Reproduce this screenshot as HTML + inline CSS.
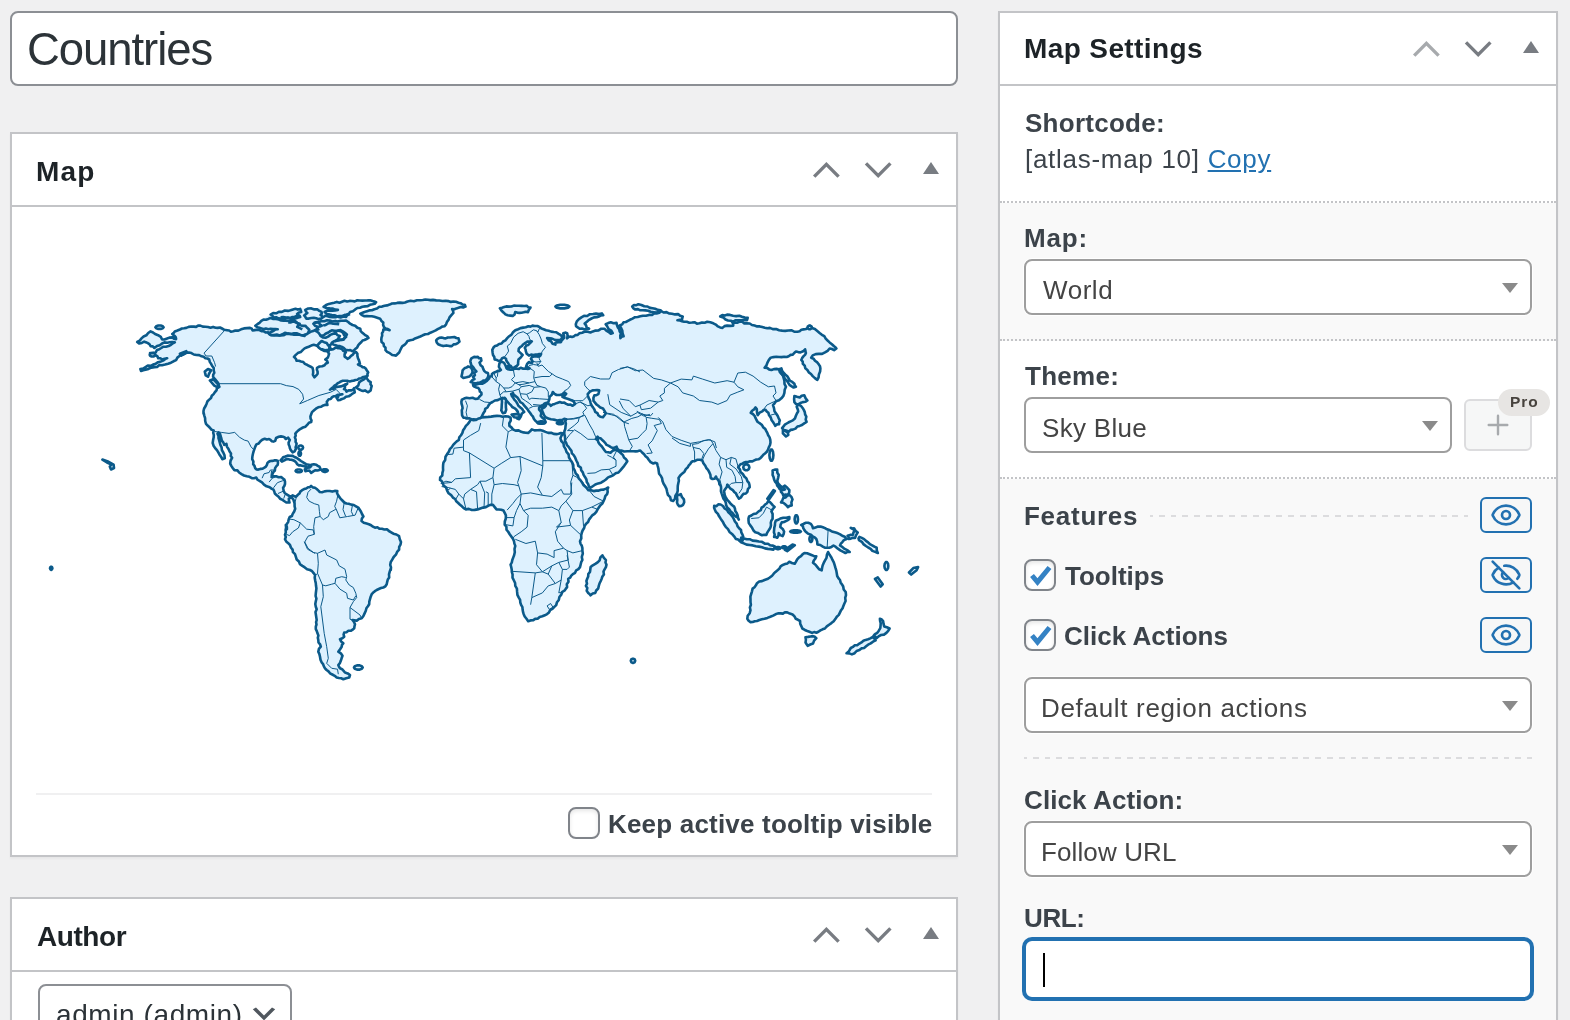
<!DOCTYPE html>
<html lang="en">
<head>
<meta charset="utf-8">
<title>Edit Map – Countries</title>
<style>
*{box-sizing:border-box;margin:0;padding:0}
html,body{width:1570px;height:1020px;overflow:hidden;background:#f0f0f1}
body{font-family:"Liberation Sans",Arial,sans-serif;color:#3c434a;position:relative;font-size:26px;-webkit-font-smoothing:antialiased}
.abs{position:absolute}
.t{will-change:transform;position:absolute;white-space:nowrap;line-height:1;transform-origin:0 0}
b,.b{font-weight:700}
#title{left:10px;top:11px;width:948px;height:75px;border:2px solid #8c8f94;border-radius:8px;background:#fff}
#title .t{left:17px;top:14px;font-size:44px;color:#2c3338}
.postbox{position:absolute;background:#fff;border:2px solid #c3c4c7;box-shadow:0 2px 2px rgba(0,0,0,.04)}
.hndle{position:absolute;left:0;top:0;right:0;height:73px;border-bottom:2px solid #c3c4c7}
.hndle .t{left:25px;top:24px;font-size:28px;font-weight:700;color:#1d2327}
.hicons{position:absolute;right:0;top:0;width:160px;height:71px}
#mapbox{left:10px;top:132px;width:948px;height:725px}
#authorbox{left:10px;top:897px;width:948px;height:200px}
#side{left:998px;top:11px;width:560px;height:1100px}
.sec{position:absolute;left:0;right:0}
.dot{border-bottom:2px dotted #c3c4c7}
.gray{background:#f9f9f9}
.lbl{font-weight:700;color:#3c434a;font-size:26px}
.sel{position:absolute;height:56px;border:2px solid #9e9e9e;box-shadow:0 0 0 1px rgba(255,255,255,.9);border-radius:8px;background:#fff}
.sel .t{left:17px;top:14px;font-size:26px;color:#444}
.sel:after{content:"";position:absolute;right:12px;top:22px;border-left:8px solid transparent;border-right:8px solid transparent;border-top:10px solid #8a8a8a}
.sel.wp:after{display:none}
.sel.wp .t{color:#2c3338}
.cb{position:absolute;width:32px;height:32px;border:2px solid #80848a;border-radius:8px;background:#fff;box-shadow:inset 0 2px 4px rgba(0,0,0,.1)}
.cb svg{position:absolute;left:-2px;top:-2px}
.eye{position:absolute;left:480px;width:52px;height:36px;border:2px solid #2271b1;border-radius:6px;background:#f6f7f7}
.eye svg{position:absolute;left:8px;top:0px}
.dash{position:absolute;height:2px;background:repeating-linear-gradient(90deg,#dcdcde 0 6px,transparent 6px 12px)}
</style>
</head>
<body>

<div id="title" class="abs"><span id="tCountries" class="t" style="left:14.8px;top:14px;font-size:45.5px;letter-spacing:-1.06px">Countries</span></div>

<div id="mapbox" class="postbox">
  <div class="hndle"><span id="tMap" class="t" style="left:24.2px;top:23.5px;font-size:28px;letter-spacing:1.2px">Map</span>
    <svg class="hicons" viewBox="0 0 160 71"><g fill="none" stroke="#787c82" stroke-width="3.4"><path d="M18.2 42.6 30.4 30.4 42.6 42.6"/><path d="M70 29.4 82.2 41.6 94.4 29.4"/></g><path d="M127 40 135 28 143 40z" fill="#787c82"/></svg>
  </div>
  <!--MAP--><svg class="abs" style="left:-2px;top:-2px" width="948" height="724" viewBox="10 132 948 724"><g fill="#def1fe" stroke="#0b5a8a" stroke-width="2.6" stroke-linejoin="round"><path stroke="none" d="M255.7 325.6 262.7 319.2 271 314.1 280.6 311.6 290.8 310.3 298.4 308.7 306.1 308.4 313.7 308.7 323.3 306.5 336 302 350 301.1 350 333.2 339.2 330.7 326.5 335.8 320.1 339.6 307.4 335.8 288.2 334.5 269.1 335.2 253.2 330.7Z"/><path d="M137.2 342 139.7 340.6 141.5 338.4 143.6 336.5 146.3 335.3 148.2 333 150.6 331.4 153 332.5 155.1 334 158.1 335.2 160.8 336.9 162.1 339.5 164.4 339.5 166.5 338.7 169.3 337.6 172.3 337.4 174 338.7 176.1 339.1 175.8 337.4 174.8 336.1 173.5 335.1 172.3 334 173.8 332.9 174.8 331.4 177.4 330.5 179.9 329.5 181.9 328.5 184.1 328.3 186.3 327.9 188.7 326.9 191.3 326.5 193.9 326.6 196.1 326.9 198.1 325.6 200.3 325.6 202.8 326.6 205.4 326.7 208 327 210.5 327.7 213.1 326.9 215.6 327.7 217.7 327.9 220 327.5 222 328.5 224.4 329.8 227.1 330.2 229.2 330.5 230.9 331.7 233.2 331.3 235.4 330.5 238.4 330.6 241.1 329.3 244 328.4 247 328.1 250 327.9 251.8 328.7 252.6 330.5 254.8 330.1 257 329.8 259.4 330 261.5 331.1 263.8 331.3 265.9 332.5 268.2 332.4 269.2 334.2 271.1 335.1 274.3 335.4 277.4 335.2 280.6 335.5 283.5 335.3 286.2 333.8 289.2 334 291.6 334.2 294 334.6 296.4 334.6 298.8 334.7 301.7 335 304.5 335.9 306 333.9 308.3 333 310.6 331.8 313.1 331.1 315.8 329.5 318.9 329.2 320.7 330.3 322.7 331.1 321.1 333.2 320.8 335.9 322.9 337.5 325.5 337.8 328.1 336.6 330.3 334.9 333.1 333.8 336.1 333.6 337.7 335.3 339.9 335.9 338.6 338.1 337 340.1 334.6 341.3 332.2 342.6 331.2 344.4 329.4 345.4 330.2 347.4 330.6 349.6 333.3 349.1 335.7 347.6 337.6 348.1 339.5 348.3 341.8 349 343.3 350.8 345.9 352.1 344.6 354.2 344.6 356.6 346.1 357.6 347.5 358.8 349.5 357.6 351 355.9 352.9 354.6 354.2 352.7 356.1 352.1 357.4 353.8 357.4 355.9 358 358.2 359 360.4 359.4 362 359.9 363.6 358 364.5 359.6 365.3 361.2 366.1 362.6 367.3 364.4 367.4 365.7 368.5 366.6 370 368.2 372.5 367.4 374 367.6 375.7 365.6 376.6 363.3 377 361.2 378.2 359.1 378.5 357.4 379.8 355.4 380 353.5 380.8 351.6 380.9 349.7 381.4 347.8 380.9 345.9 380.8 342.7 380.8 341 381.4 339.5 382.4 337.7 383.2 336.3 384.6 334.5 385.7 333.1 387.2 331.5 388.4 330 389.7 331.8 388.7 333.8 388.8 335.7 387.2 338.2 386.8 340.8 386.4 343.3 385.6 345.2 384.5 347.2 383.7 345.9 384.9 344.6 385.9 345 387.6 344 389.1 345.7 389.9 346.5 391.6 348.6 390.3 351 390.4 353 389.8 354.2 388.1 354.3 390.2 354.8 392.3 352.8 393.5 351 394.8 348.7 396.3 345.9 396.7 343.9 398.4 341.4 399.3 339.9 400 338.2 400.2 336.6 397.7 338.2 396.8 338.6 395.1 340.5 394.6 342.4 394.2 340 394.7 337.6 394.8 335.7 396.1 333.6 396.2 331.9 397.4 330.7 399 328.7 399.3 326.8 401.8 327.1 403.4 327.4 405 325.3 404.8 323.3 405.4 320.9 406.8 318.2 407.3 315.9 408.7 313.8 410.5 312 412.1 311.2 414.3 310.4 416.4 310.6 418.7 311.5 420.3 311.2 422.1 308.9 422.8 307.4 424.7 305.5 426.7 302.9 427.5 300.6 428.8 298.4 430.4 296.8 431.9 295.3 433.6 295.7 435.6 294.9 437.4 295.7 439.6 295.6 441.9 296.6 443.7 296.2 445.7 295.6 447.3 295.9 448.9 294.6 451.4 292.7 452.4 290.8 450.2 289.9 448.3 289.5 446.3 288.7 444.5 288.6 442.5 289.8 440 288.2 437.7 285.7 439 284.8 437.4 283.1 436.8 280.9 436.4 278.7 436.8 276.1 438 275.2 440.9 273.5 441.6 271.7 441.2 270.5 439.9 269.1 439 266.9 439.5 264.7 438.7 262.2 439.7 260.2 441.5 258.7 443.5 256.4 444.4 255.3 446.6 254.5 448.9 253.6 451.4 252.9 454 252.4 456.5 252.2 459.1 253.4 461.5 253.2 464.2 254.5 465.9 255.1 468 256.4 469.4 258.3 469.6 260.4 468.9 262.7 468.6 264.4 467.7 265.9 466.7 266.9 464.9 267.5 462.9 268.8 461.7 270.4 461 272.3 460.9 274.2 460.4 276 460.4 277.7 460.7 278 462.9 277.7 464.8 276.4 466.1 275.1 468.1 274.9 470.5 273.3 472.2 272.3 474.4 271.6 477 273.8 476.2 276.1 476.3 278.6 477.2 281.2 477 282.7 478.4 284.4 479.5 285 481.7 285 484 284.3 486 283.1 487.8 283.4 489.4 283.7 491 284.7 492.9 286.3 494.2 287.9 495.1 289.5 496.1 291.2 496.3 292.7 495.4 295.2 496.7 296.7 496 297.8 494.8 299.5 493.5 300.3 491.6 302.1 490.2 304.1 489.1 306.2 488.5 308 487.2 309.8 487.2 311.1 485.9 312.8 487.4 315 487.8 316.7 489 318.2 490.4 319.8 492 322 492.3 324.5 491.4 327.1 491 329.7 491 332.2 491.6 334.7 490.9 337.3 491 337 493 337.9 494.8 339.2 496.7 340.5 498.6 342.4 500.5 344.3 502.5 346.4 503.5 348.7 503.7 351.2 504.6 353.8 505 356 506.3 358.3 507.6 359.6 509.5 360.9 511.4 362 514 363.4 516.5 361.9 518.5 361.5 520.9 363.8 522.7 366.6 523.5 368.9 524.2 371.1 525.2 373 526.7 375 527.7 377.4 527.3 379.3 528.6 381.9 528.7 384.4 529.5 387 529.2 388.9 531 391.2 532.3 393.4 533.7 396.4 534.5 399.1 536.2 399.8 539.2 401 542 400.5 544.6 399.2 546.9 399.1 549.6 397.1 551.9 395.9 554.7 393.7 557 392.1 559.8 390.7 562.2 390.2 564.9 391 567.4 390.8 570 390.8 568.3 389.8 571.3 389 574.3 389.2 577.5 387.8 579.5 387.2 581.8 386.7 584.2 385.4 586.3 383.3 587.5 381 588 378.8 589 376.7 590 374.9 591.2 373.2 592.6 371.7 594.2 370.7 596.7 370 599.2 369.3 601.7 369.2 604.2 367.9 606.3 366.4 608.3 365.8 610.8 364.6 613.4 363.4 616 361.7 618.3 358.9 618.9 356.7 620.8 354.6 620.3 352.5 620 354 621.9 355 624.2 354.5 626.2 354.2 628.3 352.6 629.7 350.8 630.8 348.4 630.8 346.5 632.2 344.2 632.5 343.6 634.6 344.2 636.7 342.3 638.3 340 639.2 341.2 641.6 343.3 643.3 342 644.8 341.7 646.7 340.1 649.2 338.3 651.7 340.8 653.3 342.5 655.8 341.6 658.3 340.8 660.8 339.9 663.1 338.3 665 339 666.7 340 668.3 342.1 669.2 343.6 670.8 345 672.5 347.7 673.4 350 675 349.2 677.5 346.2 678.2 343.3 679.2 341.2 678.3 338.9 678 336.7 677.5 334.7 675.8 332.3 674.5 330 673.3 328.5 671.4 326.6 670 325 668.3 323.9 666.4 323.1 664.2 321.7 662.5 320.5 659.7 320 656.7 319.4 654.1 318.3 651.7 318.9 648.9 320.8 646.7 320.1 644.4 318.5 642.5 318.3 640 317.8 637.8 318.4 635.5 317.5 633.3 316.8 631.1 315.8 629.1 315.8 626.7 316.5 624.5 316.1 622.2 316.7 620 316.3 617.4 315.9 614.7 315.5 612.1 316.7 609.3 315.8 606.7 315.3 604 315.8 601.3 316.4 598.7 315.6 596 315.8 593.3 316.1 590.8 316.4 588.3 316 585.8 315.8 583.3 315.2 580.6 314.7 577.8 315 575 313.6 573.1 312.1 571.2 310 570 307.1 569.2 304.8 567.4 302.4 565.9 300 564.2 298.9 561.5 296.7 559.5 295.8 556.7 295 554.2 293 552.2 292.6 549.6 290.9 547.5 290 545 288.2 543.2 286.2 541.5 285 539.2 285.8 537 285 534.7 285.8 532.5 285.6 530 286.1 527.5 285.8 525 286.8 527 286.9 529.2 286.9 527 286.3 524.8 288.1 522.1 288.8 519 289.7 517 291.9 516 292.7 513.9 294.2 511.5 295.2 508.8 294.6 506.3 294.6 503.7 294 501.5 293.3 499.3 291.4 497.4 288.8 498.6 289 500.6 289.5 502.5 286.3 502.5 284.4 501.2 282.5 499.9 280.1 498.8 278.6 496.7 276.7 495.2 274.8 493.5 274.3 491.5 273.5 489.7 271.5 488.6 269.7 487.2 266.6 486.3 264 484.6 262 482.4 259.5 480.8 257.4 479.7 256.3 477.6 254.1 478.2 251.9 478.2 249.5 476.8 246.8 476.3 244 475.5 241.5 474.1 239.1 472.5 237.4 470.4 234.4 470.1 232.7 468 231.3 465.9 230.2 463.6 230.6 460.5 232.1 457.8 230.8 455.9 231 453.4 229.6 451.5 228.5 449 226.9 446.6 226.4 443.8 224.2 444.9 223.4 442.6 221.8 440.6 221.3 438.2 220.6 436.2 220.1 434 218.5 432.4 217.5 433.8 218.5 435.9 218.5 438.2 219.2 440.4 219.8 442.7 220.4 444.9 221.6 447.3 221.9 450.1 223.3 452.5 224.5 455.3 224.8 458.3 222.3 459.2 221 456.7 219.4 454.4 218.3 452.4 217.1 450.4 215.6 448.7 213.7 446.1 212.7 443 213.1 440.1 213.7 437.2 213.8 435 213.2 432.7 213.7 430.5 211.4 429.6 209.9 427.7 207.9 425.8 206 423.8 205.2 421 205.1 418.1 204.2 415.3 203.6 412.4 203.5 413.6 203.5 411 204.1 408.5 205.6 406 206.7 403.4 207.5 401.2 209.2 399.6 211 398 211.8 395.8 213.6 394.1 215 392 216.5 390.4 216.9 388.2 219.4 386.9 218.5 385.1 218.2 383.1 216.6 381.1 215 379.2 213.1 376.7 213.2 374.6 214.3 372.9 213.7 370.4 213.7 367.8 212.2 366 211.1 363.9 209.8 361.9 209.2 359.5 207.4 358.5 205.4 358.2 203.7 356.8 201.6 356.3 199.2 355.1 196.5 355 193.8 354.5 191.4 353.1 188.9 352.6 186.3 352.5 183.9 354 181.2 355 179.2 356.2 177.4 357.6 176.1 360.1 173.5 361.3 171 362.7 168.1 363.7 165.1 364.6 162.1 365.2 159.4 365.1 157.1 367 154.4 367.1 151.3 367.6 148.5 368.9 145.5 369.7 143.2 370.2 141 370.9 140.4 369 143.1 368.6 145.5 367.1 147.8 365.6 150.7 365.9 153.1 364.6 155.8 363.7 158.1 362.2 160.8 361.4 163.1 360.6 165.1 359.2 167.2 358.2 164.6 358.7 162.1 359.5 160.4 358.2 158.2 358.2 157.6 356.6 156.3 355.6 154.2 354.8 152.3 353.4 150 353.1 152.9 352.9 155.7 352.5 157 349.9 159.3 349.2 161.3 348 163.3 346.7 166 346.7 168.6 346 171 344.8 172.8 343.3 174.8 342.3 172.2 342 169.7 342.3 167.2 342.7 164.5 342.4 162.1 343.5 159.8 345.3 157 346.1 155.7 347 154.4 348 152.8 346.4 150.6 346.1 149.4 344.1 147.4 342.9 145.8 342.2 144.2 341.6 141.8 342.9 139.1 343.5ZM362.7 667.5 361.8 668.8 359.7 669.6 357 669.6 354.8 668.8 354 667.5 354.8 666.2 357 665.4 359.7 665.4 361.8 666.2ZM475.7 420 473.4 420.3 471.4 419.2 469 418.3 466.5 418.5 465 417.7 463.4 417.7 462.1 415.4 461.9 412.7 461.8 410.3 462.6 408.1 462.2 405.8 461.5 403.5 461.4 401.6 461.9 399.7 464.1 398.6 466.5 397.8 469.6 398.2 472.6 397.8 475.1 398.9 477.9 398.6 479 397.2 480.2 395.9 481.5 394.6 481.4 392.8 479.9 391.6 479.5 389.8 478.4 388.1 476.4 387.5 474.8 386.9 473.4 385.9 473 384.4 475.5 384.8 477.9 384 480.2 383.5 482.5 383.7 484.9 382.3 487.1 380.6 489 378.7 489.8 376.8 491.7 376 491.9 374.2 493.2 372.9 495.5 372.1 497.7 370.9 499.4 370.9 500.9 369.9 499.8 368.4 498.9 366.9 499.1 365.2 499.4 363.6 500.2 362.1 501.6 361.7 504.1 362.9 505.5 365.5 506.7 368.4 507.9 369.3 510.5 369.8 512.1 369.7 513.7 369.1 515.3 368.7 516.9 368.7 519 368.9 520.7 367.7 523.2 368.7 525.8 368.4 527.7 369 529.6 368.4 528 367.2 526.1 366.4 527.1 363.9 529 362 530.5 362.8 532.2 362.6 532.5 361.3 530.9 358.8 532.2 356.9 534.1 356.5 536 356.2 538.3 356.6 540.4 355.6 541.1 354 539.5 354 537.9 354.3 535.6 354.6 533.4 355 531.1 354.6 529 355.6 526.7 353.7 525.8 351.1 525.6 349.5 524.8 348 526.4 345.4 528.3 345 529.6 343.5 531.8 341.3 529.5 341.6 527.1 341.6 525.9 342.7 524.5 343.5 523 344.5 522 346 520.2 347.1 518.8 348.6 518.5 351.1 520.7 353.1 522.6 355 520.7 357.5 518.5 359.4 518.3 361 518.1 362.6 518.1 364.4 516.9 365.8 515.3 366.7 513.7 367.8 511.8 367.4 510.8 365.9 509.2 365.2 508.4 363.5 507.3 362 506.3 360.6 506 358.8 504.1 357.5 502.1 358.3 500.9 360.1 499.4 361 497.7 360.4 496.2 359.8 494.6 359.4 494.3 357 493 355 492.6 352.5 492.3 349.9 493.6 347.3 495.1 346 497.1 345.4 499.1 344 501.6 343.5 503.2 341.5 505.4 340.3 507.2 338.2 509.2 336.2 511.5 334.6 513 332.3 515.3 330.3 518.1 329.2 520.5 328.1 523.2 327.6 525.8 327.2 528.3 326.3 530.5 326.6 532.5 325.6 534.7 326 537.4 326 539.8 327.2 541.5 328.6 543.6 329.2 546.1 330.2 548.7 330.7 551.2 331.6 553.8 332 556.3 332.2 558.3 333.6 560 334.6 561.5 335.8 562.2 338.1 560.2 340 558.6 340.1 557 340 555.3 340 553.8 339.4 552 338.6 550 338.4 547.1 338.1 548.6 340.2 551 341.3 552.6 343.8 555.4 344.6 555.4 342.7 558.3 342.2 561 342.1 561.7 340.3 563.1 339 564.2 337.6 564 335.8 563.3 333.3 565.2 332.6 567.2 333.2 567.6 335.8 567.1 338.4 568.5 337.1 570.4 336.6 572 337 573.6 336.6 575.3 335.1 577.7 334.9 579.3 333.3 582.2 332.7 585 331.5 587.7 331.8 590.4 332.5 592.9 331.4 595.5 330.6 598.6 330.4 601.3 328.7 604.4 328.7 606.3 330.7 608.7 332 610.8 333.8 612.7 333.1 611.3 330.6 608.6 329.1 607.3 326.5 605.7 324.2 608.2 323.1 610.8 322.3 613.6 323.2 616.5 322.9 617 325.2 617.8 327.4 619.2 329.1 619.6 331.4 621 333.1 620.3 335.6 620.4 338.2 621.7 336.7 623.6 336.3 622.6 333.5 622.3 330.6 621.1 328 619.7 325.5 622.1 324.4 623.6 322.3 625.9 322 627.9 320.9 629.9 319.8 632.5 318.6 635 317.2 637.7 317 640.3 316.3 642.9 315.7 646 315.7 649 314.9 652.1 314.9 654.2 313.5 656.7 313.4 659.3 312.8 661.3 311.1 663.6 312.5 666.5 312.1 668.9 313.4 672 313.7 675 314.4 678.1 314.1 680.1 315.8 682.7 316.4 682 319.5 679.7 319.8 677.4 320.2 679.7 320.4 681.9 321.2 684.2 321.8 686.8 321.8 689.3 322.7 691.9 322.5 694.5 322.2 696.9 323.6 699.5 323.3 702 322.5 704.7 322.7 707.2 321.8 710.3 322.3 713.3 323.3 715.8 324.6 717.9 326.4 720.1 327.4 722.5 327.9 724.5 326.1 727.1 325.6 730.2 325.9 733.2 325.6 733.2 324 732.4 322.5 734.8 322.8 737.1 322.7 739.3 321.8 742 321.6 744.3 323.4 747 323.3 749.7 323.5 752 325 754.6 325.6 757.1 326.4 759.8 326.4 762.3 327.1 764.8 327.8 767.3 328.3 769.9 327.9 772.8 329.1 776.1 329 779.1 330.2 782.1 330.6 785.2 330.9 788.2 330.5 791.3 330.2 794.2 331.6 797.4 331.7 799.6 331.2 801.4 329.8 803.6 329.4 806 329 808.1 327.9 809.7 325.6 811 326.6 812 327.9 814.9 328.9 817.3 330.9 819.6 332.9 821.9 334.8 824.3 336.2 825.7 338.6 827.6 340.5 829.6 342.4 831.9 344.2 834.1 346.2 835.4 347.2 836.4 348.5 834.1 350.1 832 349 829.6 348.5 827.6 350.8 825 352.4 822.1 353.9 818.9 353.9 815.7 354.1 812.7 355.4 811.2 357.7 813.6 358.7 815 360.8 817.3 362.4 818.9 364.6 820 366.3 820.4 368.4 820.1 371.5 818.9 374.5 818.6 377.3 817.3 379.9 814.9 378.1 812.7 376.1 811 374 808.8 372.4 807.4 370 805.3 368.3 804.7 365.6 802.8 363.8 802.7 361.6 801.3 360 802.2 357.9 803.6 356.2 805 354.8 805.9 353.1 805.4 351.2 805.1 349.3 803.1 351.3 800.5 352.4 798.2 352.1 795.9 351.6 794.2 353 792.8 354.7 790.6 354.9 788.7 356.2 786.7 357 784.2 356.8 781.6 357.1 779.1 357 776.3 356.8 773.5 357.1 770.7 357.7 768.9 359.8 767.6 362.3 766.5 365.2 764.6 367.7 767.1 367.9 769.1 369.4 771.4 370 773.9 369.1 776.5 368.9 779.1 369.2 780.8 371.7 782.1 374.5 783.3 376.4 783.8 378.6 784.4 380.7 784.5 383.9 786 386.8 784.7 389.7 784.4 392.9 783.4 395.9 781.4 398.3 779 400.3 776 401.3 774.6 403.3 773 405.1 774 408.1 774.5 411.3 776.1 413.5 777.6 415.8 778.6 418.1 779.8 420.4 779.2 422.3 779.1 424.3 776.9 424.4 775.3 425.8 774.2 423.9 773 422 771.5 419.9 770.7 417.4 769.1 415.3 768.4 412.8 766.7 411.4 765.3 409.7 763.6 410 762.3 411.3 759.6 412.7 757.7 415.1 757.1 413.2 756.9 411.3 756.8 409.1 755.4 407.4 754.1 409.4 752.1 410.8 750.8 412.8 752.9 414 754.6 415.8 755.5 417.9 756.5 420 757.7 422 760 423.4 762 425.1 763.4 427.5 765.2 428.9 766.2 430.9 767.3 432.9 768.2 435.3 769.6 437.4 770.3 439.8 770.5 442.5 770 445 768.8 447.4 768 449.7 766.8 451.8 765 453.5 763.3 454.8 761.9 456.5 760.4 458.1 758.5 459.3 756.3 459.5 754.3 460.4 752.4 461.4 750.1 461.3 748.1 462 745.8 462.1 743.6 462.7 742.2 463.7 740.5 464.2 739.3 465.7 738.2 467.3 739.9 469.3 740.5 471.9 742.8 473.9 744.3 476.5 746.4 478.4 747.4 481.1 748.9 482.9 749.5 485 749.7 487.2 747.9 489.2 747.4 491.8 745.9 493.5 743.5 493.9 742 495.6 740.9 497.5 739 498.7 737.3 496.1 735.9 493.3 734.2 491.9 732.8 490.2 730.1 488.4 728.3 485.7 727.3 484.6 726.8 487 725.3 489 724 491 724.4 493.1 724.8 495.3 725.8 497.3 727.1 499.7 729 501.6 730.6 503.7 732.3 505.2 734.1 506.6 735 508.8 735.3 511.1 736.7 513.1 737.6 515.2 737.9 517.5 738.8 519.6 737.8 517.6 735.8 516.6 734 515 732.5 513 730.6 511.4 729.2 509.2 727.2 507.5 726.1 505.1 725.8 502.7 725 500.6 723.5 498.7 722.6 496.2 721.7 493.6 720.9 491.1 721.1 488.4 720.9 486.2 719.4 484.3 719.1 482.1 718.2 480 716.6 478.3 716 476.5 714.5 478.8 712.5 479 710.7 478 710.4 474.8 709.1 471.9 708 469.8 706.3 468 705.3 465.8 703.4 463.3 702.3 460.4 700 459.7 697.1 459.8 694.6 461.2 692.9 461.2 691.5 462 690.3 463.8 688.8 465.4 687.7 467.3 685.8 469.2 684.5 471.7 682.4 473.4 680.2 475.5 678.5 478 678.9 480.6 678.3 483.2 677.8 485.7 677.7 488.3 677.7 490.8 677 493.3 675.4 495.7 675 498.7 673.2 501 670.9 500.2 670.2 497.2 667.9 494.8 667.1 491.8 666.5 488.9 665.2 486.3 663.6 483.8 662.5 481.1 662.1 478.4 660.9 476 659.1 473.8 658.7 471.1 658.4 468.5 657.7 466 657.1 463.5 655.2 462.8 653.3 463.5 650.6 462.1 648.7 459.7 647.4 457.7 645.5 456.2 644.1 454.3 642.1 452.5 640.3 450.5 638 451.1 635.7 451.4 633.4 451.2 630.3 451.3 627.3 451.2 624.2 451.5 621.2 450.5 619.1 450.2 617.4 448.9 616.6 446.7 614.7 447.6 612.8 448.2 610.8 447.1 608.9 445.9 606.6 444.9 605.1 442.8 603.6 441.2 602 439.8 600.5 438.2 598.7 438 597.5 436.7 595.9 439 597.8 440.4 598.5 442.6 599.8 444.4 601.9 446.5 603.6 448.9 604.7 450.5 605.9 452 608.2 452.3 610.5 452.8 612.5 450.9 615.1 449.7 617.4 450.5 619.4 451.8 621.2 453.5 623 455.1 623.9 457.4 625.8 458.9 627.3 461.2 625.8 463.5 624.2 465.8 622.3 468.1 620.4 470.4 618.5 472.5 615.7 473.3 613.5 475 610.9 476.3 608.1 477.4 605.9 479.5 603.5 481.2 601.1 482.7 598.2 483.4 595.3 484.5 592.8 486.2 590.2 487.9 588.9 486.5 588.2 484.1 586.8 482 586.4 479.5 585.1 477.2 583.6 474.9 582.8 472.4 581.2 470.3 580.8 467.5 578.3 465.9 577.7 463.2 576.3 460.5 575.2 457.7 573.7 455.1 571.9 453.4 571.4 450.8 569.9 448.9 568.6 446.9 566.9 445.2 566.2 442.8 565 440.8 565.1 438.4 564.8 436 564.3 433.7 564.4 431.2 565.3 428.9 565.5 426.5 565.9 423.5 565.3 421.3 566.2 419.2 564.2 418.8 562.4 419.8 559.8 420.1 557.3 420.5 555.2 419.9 553.1 419.5 550.9 419.2 548.3 418.5 545.8 417.3 544.2 415.5 543.3 413.4 542.2 411 542 408.3 544.2 407.5 545.8 405.8 546.8 402.8 544.6 403.5 543 405.1 541.4 405.8 539.9 406.6 539.1 408 539.1 409.7 540.4 411.1 541.4 412.7 540.7 415.8 542.1 417.4 543.7 418.8 544.9 420.2 545.6 421.9 543.4 422.2 541.4 423 539.1 422.4 536.8 421.9 535.1 420.5 533.8 418.8 533 416.7 531.5 415 530.2 413.1 528.8 411.2 527.6 409.4 526.1 407.7 524.3 405.7 522.7 403.5 520.3 402.1 518.9 399.7 517.4 397.6 515.4 395.9 513.8 394.9 513.1 393.2 511.2 394 512 396.3 513.3 397.9 514.3 399.7 516 401.4 517.3 403.5 518.4 405.8 520.4 407.4 522 408.7 523.1 410.4 524.2 412 521.9 413.5 520.8 416.5 519.2 419.2 517.3 418.5 518.5 416.9 518.9 415 518.1 413.4 517.7 411.6 516.2 409.6 514.3 408.1 512.2 407 510.8 405.1 509.2 403.6 507.8 402 506.3 400.7 505.5 398.9 503.8 398.7 502.4 397.8 500.1 398.9 497.8 400.1 494.9 400.5 492.5 402 490.3 403.2 488.7 405.1 487.5 407.5 485.2 408.9 484.9 411 483.7 412.7 482.7 414.6 481.8 416.5 480.2 418.3 477.9 418.8ZM470.6 420 473.3 419.3 476.2 419.6 478.8 418.4 481.9 417.5 485 417.1 488.2 416.9 491.1 416.6 494.1 416.1 497 415.9 500 416 502.7 416.7 505.5 416.3 508.2 416.5 510.6 417.6 510.8 420.5 509.3 423.1 509.4 425.9 511.4 427.4 512.9 429.4 515.5 430.6 518.6 430.4 521.2 431.8 523.5 432.4 525.8 432.7 528.2 432.9 530.1 431.3 531.8 429.4 534.5 430.4 537.2 430.2 540 430.1 542.8 430.8 545.5 431.9 548.2 432.9 551.1 432.7 553.7 433.9 556.5 434.1 558.7 433.7 560.8 433 563 433.4 561.5 435.7 560.4 438.2 561.3 441 563.5 443.3 563.9 446.4 565.5 448.9 566.5 451.8 568.6 454.3 569 457.5 570.6 460.2 572.2 462.5 573.3 465 573.3 468 574.7 470.4 575.7 473.3 577.8 475.5 578.7 478.4 580.8 480.6 582.2 482.7 583.4 485 585.4 486.7 587 488.4 588.4 490.3 591 490.3 593.6 491.1 596.2 490.6 598.8 490.6 601.1 489.8 603.7 489.6 606 488.6 608.2 487.5 607.4 489.6 607.7 491.9 607.1 494.1 605.3 496.2 604.6 498.8 603.5 501.2 602.4 503.5 600.4 505.2 599 507.3 597.6 509.4 596.3 511.8 594.5 513.9 592.2 515.4 590.6 517.6 589 519.6 588.1 522.1 586.1 523.8 584.7 525.9 584 528.3 582.6 530.5 581.8 532.8 581.2 535.3 581.3 538.4 580 541.2 580.5 543.6 581.8 545.7 582.4 548.1 582.4 550.6 582.8 553.7 581.8 556.9 582.4 560 581.2 562.2 580.6 564.7 580 567.1 578.4 569.1 576.2 570.3 575.1 572.8 572.9 574.1 571.3 575.7 570.2 577.7 568.2 578.8 568.5 581.7 566.8 584.2 567.1 587.1 565.7 588.9 564.4 590.7 562.4 591.8 561.3 594.6 559.4 597 558.8 600 557 602.2 556.2 605.1 554.1 607.1 552.4 608.9 550.1 610.1 549 612.5 547.1 614.1 544.8 615.3 542.3 616.3 539.7 617 537.6 618.8 535.1 618.9 533 620.3 530.5 620.4 528.2 621.2 526.5 618.8 524.7 616.5 523.7 614.2 523 611.9 522.6 609.5 522.4 607.1 521.1 604.9 520.3 602.5 520.1 599.8 518.8 597.6 517.4 594.8 517.1 591.7 516.9 588.6 515.3 585.9 515.1 583 513.8 580.3 512.5 577.6 512.6 574.6 511.8 571.8 511.7 569.4 511.2 567 510.6 564.7 511.8 562.5 512.3 560 513.2 557.6 514.1 555.3 514.8 552.2 514.5 549 515.3 545.9 514.4 543.6 514 541.1 512.9 538.8 511.3 536.5 509.7 534.2 508.2 531.8 506.5 529.7 506.4 526.8 504.7 524.7 504.8 521.5 505.8 518.5 505.9 515.3 504.7 512.9 503.5 510.6 501.2 509.8 498.9 509.5 496.5 509.4 494.7 507.1 492.9 504.7 490.4 504.9 488.1 505.8 485.9 507.1 483.1 507.6 480.3 508.5 477.6 509.4 474.7 509.9 471.8 510 468.8 508.9 465.9 509.4 463.7 508.1 461.9 506.3 460 504.7 458.2 503 456.3 501.3 455.1 499 452.9 497.6 451.1 495.1 448.6 493.3 447.1 490.6 446.1 487.5 443.5 485.4 442.4 482.4 441.5 480.9 440 480 440.2 477.4 442.3 475.5 442.4 472.9 443.1 470.3 443 467.7 443.1 465 443.5 462.4 445.2 459.9 445.5 456.7 447.1 454.1 448.8 451.8 449.8 449.2 451.8 447.1 453.2 444.9 454.9 443.1 456.7 441.4 458.8 440 459.3 437.3 461 435.2 462.4 432.9 463.1 430.3 464.6 428.2 465.9 425.9 467.7 424.1 469.3 422.2Z"/><path fill="#fff" d="M294 356.9 295.8 354.9 297.8 353.1 300.7 352.1 302.9 349.9 304.6 348.4 306.6 347.5 308.7 346.7 311.2 345.6 313.8 344.8 316.2 345.4 318.2 346.7 320.3 348.1 322.1 349.9 324.5 351 327.2 351.2 329.1 353.7 328.5 355.7 327.8 357.6 325.3 359.5 327 360.7 327.8 362.7 325.9 363.5 324.6 365.2 322.2 366.2 319.5 366.5 317 367.8 316.9 369.8 317.6 371.6 317.6 373.7 316.3 375.4 314.4 377.3 312.9 374.8 313.2 372.6 313.1 370.3 312.5 367.8 310.7 366.7 308.7 365.8 306.9 364.7 304.9 363.9 303.3 362 301 361.4 298.9 360.7 296.6 360.7 295.9 358.8ZM548.3 402 549.3 399.5 549.6 396.9 551.8 394.8 552.8 392 554.5 393.8 556.6 395 559.8 395 562.4 394.2 564.3 392.4 566.2 393.7 564.7 395.7 562.4 396.9 564.9 398 567.5 398.8 570.1 399.7 572.6 400.7 574.1 402.1 575.1 403.9 572.6 405.8 570.6 404.6 568.3 404.8 566.2 403.9 564.3 402.6 561.9 402.8 559.8 402 557.2 402.9 554.7 403.9 552.6 404.5 550.9 405.8 549.8 404.5 548.3 403.9ZM587.7 394.2 589.7 391.8 592.5 390.4 594.7 390.3 597 390 599.2 390.4 598.8 392.3 598.3 394.2 596.4 395.1 594.4 395.2 593.4 398 593.5 400.9 595 402.6 596.4 404.4 598.3 405.7 600.3 407.6 603 408.5 604.5 410.9 605.9 413.3 604.5 415.3 603 417.2 600.4 416.7 598.3 415.2 597.4 413.1 595.2 411.8 594.4 409.5 593 407.4 591.4 405.3 590.6 402.8 590 400.3 588.7 398 588.1 396.1Z"/><path d="M255.3 325.7 257.4 324.2 259.5 322.8 261.3 320.9 263.5 319.6 266 319.7 268.3 318.9 270.6 318 273.3 318.9 276.1 319 278.8 319.6 281.1 320.4 283.5 320.6 285.9 320.6 289 320.9 292.1 320.3 295.1 321.1 297.2 322.8 299.1 324.7 302.1 325.9 305.3 325.7 307.2 327.8 309.3 329.8 308.5 331.9 307.3 333.9 305.2 334.5 303.2 335.4 301 335.2 299 334.2 297.1 333.3 294 333.2 291 333.9 287.9 333.4 284.9 332.8 282.4 334.3 279.8 335.4 276.8 334.5 273.7 335 270.6 334.9 268.6 333.3 271.1 332 273.7 330.8 275.5 329.5 277.7 329.3 275.3 329 273 329 270.6 328.8 268.3 329.3 265.8 328.5 263.5 329.3 261.5 328.4 259.4 327.8 257.3 327.2ZM270.6 314.5 273.1 313 276.2 313.3 278.8 311.9 281.9 311.9 284.8 310.5 287.9 310.9 290.5 310.2 293 309.4 295.4 308.8 297.8 309.6 300.2 308.9 301.2 311.9 298.9 312.5 297.1 314 298.9 315.3 300.2 317 297.6 317.7 295.1 318.6 292.7 318.2 290.3 318.2 287.9 317.5 285.5 318 283.2 318.4 280.8 318.6 278.4 318.3 276.2 317.2 273.7 317.5 272.4 315.8ZM305.3 309.9 308.2 308.5 311.4 308.4 314.4 309.4 317.5 309.4 319.4 310.9 321.6 311.9 321.8 313.7 320.6 315 322.1 316.1 323.6 317 321.2 318.4 318.5 319.1 316.2 318.2 313.8 317.8 311.4 318 308.9 318.6 306.3 318.6 305.4 317 304.2 315.5 305.7 314.2 307.3 312.9 306 311.6ZM323.6 306.8 326.1 305 328.8 303.9 331.8 303.3 334.3 302.8 336.8 301.9 339.5 302.7 342 301.7 344.5 300.8 347.1 301.4 349.6 300.9 352.2 301 354.8 301.4 357.3 300.3 359.8 300.5 362.4 300.6 365 300.5 367.5 300.4 370.1 300.2 372.6 301 374.4 301.5 376.1 302.2 374.7 303.8 372.6 304.3 370 304.8 367.7 306.2 365 306.4 362.4 306.8 360 307.7 357.4 308 355.2 309.4 352.9 311.2 350.1 311.9 349 313.6 347.1 314.5 346.1 317 343.4 316.5 340.6 317.5 337.9 316.7 335 315.3 331.8 315 329.3 314.4 326.7 314 324.6 311.9 327.1 310.8 329.7 310.4 332.5 310.7 335.2 310.5 337.9 309.9 335.1 309.6 332.5 308.5 329.7 308.4 326.5 308ZM313.4 323.7 316 322.4 318.8 321.9 321.6 321.1 324.3 321.2 327 320.3 329.7 320.6 332.4 321.5 335.2 320.9 337.9 321.6 340.6 320.7 343.4 320.8 346.1 320.6 348.2 322 350.1 323.7 352.5 325 355.2 325.7 357.4 327.8 360.3 328.8 360.7 331.1 362.4 332.8 364.8 334.8 367.5 336.4 368.5 337.9 366.5 339 364.4 340 362.6 340.5 361.4 342 359.8 343.5 358.3 345.1 357.2 347.4 355.2 349.1 353.9 350.5 352.2 351.2 350.3 350.1 348.1 350.2 345.7 349.8 344 348.1 342 346.9 339.9 346.1 337.3 345.8 334.8 345.1 333.1 344.4 331.8 343 333.6 341.5 335.9 341 338.9 340.1 342 340 344 338.4 346.1 336.9 344.1 335.2 343 332.8 340.7 331.1 337.9 330.8 334.8 330.7 331.8 330.3 329.7 331.5 327.7 332.8 325.5 333.8 323.6 335.4 320.6 335.9 319.6 334.3 318.5 332.8 317.1 331.7 315.5 330.8 316.9 329.5 317.5 327.7 316.5 326.4 315 325.7ZM317.5 345.1 319.5 343 321.6 341 324.1 342.2 326.7 343 328.1 345.2 329.7 347.1 328.9 349.1 328.7 351.2 326.8 350.1 324.6 350.2 322.7 349.3 320.6 349.1 318.6 347.4ZM360.3 313.6 363.2 312.5 366.2 311.4 369.2 310.4 371.9 310.3 374.4 309.2 377 308.6 379.3 306.8 382 306.6 384.5 305.8 387.1 305.4 389.6 304.6 392 303.5 394.7 303.4 397.2 302.9 399.8 302.6 402.5 302.9 405 302.5 407.5 301.5 410.6 300.8 413.9 301.2 417 300.2 420.2 300.2 422.8 300 425.3 299.5 427.9 299.8 430.4 300.1 433 299.9 436.2 300.4 439.3 300.5 442.5 301 445.7 300.8 448.3 301.1 450.8 301.9 453.4 301.5 456 301.8 458.5 302.7 460.6 303.2 462.6 304.5 464.8 304.7 465.5 306.6 463.2 307.4 460.8 307 458.5 307.8 456.4 308.4 454.4 309.3 452.1 309.1 453.1 310.9 453.4 312.9 451.4 315.1 449.5 317.4 448.6 319.8 447 321.9 446.1 324.3 444.4 326.3 442.1 326.6 440.2 328 438.1 328.9 435.7 330.4 433 331.6 430.4 332.7 428 334 425.3 334.2 422.8 335.3 420.3 336.5 417.7 337.5 415.1 338.4 412.7 339.8 410.1 340.2 407.5 341 406.2 343.1 404.5 344.8 402.4 346.1 401.2 348.2 400.2 350.3 399.2 352.5 397.6 354 396 355.6 394.1 355.3 392.2 355 389.8 353.2 387.1 351.8 385.5 350.2 385.5 347.7 383.9 346.1 383.6 343.8 381.6 342.1 381.3 339.7 381.5 337.6 382.2 335.5 382 333.3 383.1 331.6 383.3 329.5 386.5 329.2 389.6 330.2 387.8 329 385.6 328.4 383.9 327 383.1 324.8 383.3 322.5 381.4 320.9 380.1 318.7 377.2 317.7 374.3 316.8 371.8 316.3 369.2 316.3 366.7 316.1 364 316.2 361.6 314.9ZM436.2 340.4 437.5 338.8 439.3 337.8 441.5 337.5 443.6 338.1 445.7 338.4 447.7 337.5 449.9 337.5 452.1 337.2 454.3 337 456.4 338 458.5 338.4 458.9 340 459.5 341.6 457.8 343.1 455.9 344.2 453.6 344.4 451.8 346.1 449.5 346.1 446.4 345.4 443.2 346.1 440.6 345.2 438.1 344.2 436.7 342.5ZM356.1 387.2 358.3 385.5 359.1 382.6 361.2 380.8 364 379.4 366.3 377.3 367.4 379.1 368.5 380.8 370.7 382.1 370.5 384.2 371.7 385.9 371.1 388.1 370.7 390.4 368.2 392.3 366.5 391.4 365 390.4 363.1 391 361.2 390.4 359.2 389.5 357.4 388.4ZM280.6 460.4 281.9 458.9 283.1 457.2 285.4 456.5 287.6 455.6 290.2 455.7 292.7 455.9 294.5 457 296.5 457.8 298.8 459.4 301 461 303.6 462.6 306.1 464.2 308.8 464.7 311.2 466.1 309.9 467.4 307.6 467.6 305.4 466.7 303.3 465.9 301 465.4 298.9 465.4 297.2 464.2 296.1 462.4 294.6 461 293 460.3 291.4 459.7 289.5 459.6 287.6 459.1 285.9 459.4 284.4 460.4 281.9 461.6ZM311.2 464.8 313.8 464.2 316.3 464.8 317.8 465.9 319.5 466.7 320.7 469.3 319.2 470 317.6 470.5 315.5 470.2 313.7 471.2 311.2 472.8 309.3 470.5 307.3 470.7 305.4 471.2 304.8 469.3 307.4 467.7 309.3 466.3ZM301.9 470.9 301.3 471.7 299.7 472.2 297.8 472.2 296.2 471.7 295.6 470.9 296.2 470 297.8 469.5 299.7 469.5 301.3 470ZM327.8 470.5 327.2 471.4 325.8 471.9 324 471.9 322.6 471.4 322 470.5 322.6 469.7 324 469.2 325.8 469.2 327.2 469.7ZM303.1 447.6 302.6 448.9 301.4 449.7 299.9 449.7 298.7 448.9 298.2 447.6 298.7 446.3 299.9 445.5 301.4 445.5 302.6 446.3ZM301 453.7 300.7 455 300.1 455.8 299.3 455.8 298.7 455 298.4 453.7 298.7 452.3 299.3 451.5 300.1 451.5 300.7 452.3ZM163.6 327.2 162.8 328.3 160.8 328.9 158.3 328.9 156.2 328.3 155.4 327.2 156.2 326.2 158.3 325.5 160.8 325.5 162.8 326.2ZM155.3 354.8 154.8 355.8 153.4 356.5 151.6 356.5 150.2 355.8 149.7 354.8 150.2 353.7 151.6 353.1 153.4 353.1 154.8 353.7ZM179.9 353.7 186.3 351.2 186.9 352.5 181.2 355.6ZM204.8 371.6 208 369 211.1 370.3 209.2 373.5 208 376.7 205.7 375.4ZM209.9 380.5 213.1 379.2 218.8 385 218.2 387.5 214.3 385.6ZM470.3 361.5 470.7 359.9 471.4 358.4 474.1 356.9 476 357.1 477.9 356.9 479.1 358.3 481 358.4 481.4 360.7 479.5 362.6 480.6 365.3 482.5 366.8 483.3 369.1 484.2 370.8 485.6 372.2 487.9 372.9 488.4 376 487.1 378.7 485.2 380.6 483.3 380.5 481.8 381.7 479.9 382.5 477.9 382.7 476 383.4 474.1 383 472.4 382.6 470.7 382.1 472.2 380.2 474.5 379.1 473 376.8 474.9 375.2 474.1 372.9 476.4 371.4 474.7 369.5 473.2 367.2 471.4 365.3 470.7 363ZM461.5 376.4 461.9 374.6 462.3 372.9 462.6 370.3 463.7 369.1 464.9 368 466.6 367.6 468 366.4 470.7 367.2 472.2 369.5 472.6 372.2 471.4 374.5 469.5 376.4 466.5 377.2 463.4 377.9ZM499.9 308.3 502 307.7 504.2 307 506.3 306.4 508.9 306.6 511.4 306.5 513.9 305.6 516.5 305.7 519 305.8 521.6 305.9 524.2 306 526.7 305.7 528.3 307.3 530.5 307.6 528.9 309.7 528 312.1 525.8 311.7 523.7 312.3 521.6 312.7 519.4 312.9 517.3 312.6 515.2 312.1 514.6 314.4 512.7 315.9 510.2 315.6 507.6 315.3 505.4 314.4 503.7 312.7 501.6 310.7ZM569.4 306.6 568 307.8 564.5 308.4 560.2 308.4 556.7 307.8 555.4 306.6 556.7 305.5 560.2 304.8 564.5 304.8 568 305.5ZM575.8 324.2 576.8 321.3 578.9 319.1 581.4 317.4 584 315.9 587.2 316 589.9 314.2 593 314 596 313.6 599 314.1 601.9 313.4 603.2 315.3 600.9 315.4 598.9 316.5 596.8 317.2 594 317.4 591.5 318.5 589.1 319.8 586.9 321.7 584.7 323.6 586.1 325.3 586.6 327.4 589.1 328.7 586.6 329.1 584 329.3 581.9 328.6 579.6 328.7 577.7 327.4 576.1 326.2ZM501.7 398.9 504.7 397.8 506.2 400.5 505.8 402.8 505.9 405.1 505.9 407.4 506.2 409.7 505.1 412.7 502.8 413.1 501.3 410.4 501.6 408.1 501.7 405.8 501.8 403.9 502 402ZM511.6 414.6 516.2 414.1 520 415 518.1 417.9 514.3 417.3ZM545.4 422.6 544.6 423.4 542.6 423.8 540.1 423.8 538 423.4 537.3 422.6 538 421.9 540.1 421.4 542.6 421.4 544.6 421.9ZM563.4 423 562.8 423.8 561.1 424.2 559.1 424.2 557.4 423.8 556.8 423 557.4 422.3 559.1 421.8 561.1 421.8 562.8 422.3ZM509.8 367.4 509.5 368.1 508.7 368.6 507.8 368.6 507 368.1 506.7 367.4 507 366.6 507.8 366.2 508.7 366.2 509.5 366.6ZM632.2 306.5 634 305 636.4 305.2 638.4 304.2 641.4 305 644.3 306.3 647.5 306.5 649.9 307.9 652.6 308.3 655.2 308.8 657.7 309.9 660.5 310.3 658.6 311.4 656.7 312.6 653.7 312.2 650.6 311.8 648.1 310.7 645.5 310.4 642.9 310.3 640.3 310.3 637.9 309.1 635.3 309.5 633.4 308.4ZM720.2 316.4 722.3 315.1 724.9 315.5 727.1 314.6 730.1 314.9 733.1 315.7 736.2 316.1 739.3 315.7 742 316.7 744.8 317.5 747.7 317.9 747 320.2 743.9 320.1 740.9 320.2 737.8 320.2 735.3 320.4 733.2 321.8 730.7 320.7 728 320.5 725.5 319.5 723.2 317.4ZM811.8 327.4 811.4 328.5 810.3 329.2 809 329.2 807.9 328.5 807.5 327.4 807.9 326.3 809 325.7 810.3 325.7 811.4 326.3ZM779.1 369.2 781.4 368.4 782.1 370.8 783.5 372.7 785.2 374.5 787.3 376.2 788.6 378.4 789.8 380.7 792.3 381.9 794.4 383.7 794.8 385.4 795.9 386.8 793.6 387.5 791.7 386.4 789.8 385.2 788.4 383.1 787 380.9 785.2 379.1 784 377.3 783.1 375.3 781.4 373.8 779.7 371.8ZM794.4 396 797 396.8 799.7 397.5 801.7 395.7 804.3 395.2 805.5 398.1 807.4 400.5 805.3 401.8 802.8 402.1 800.4 403 798.2 404.4 795.9 403.9 794.4 402.1 794.1 399.1ZM798.2 404.4 800.9 405.8 802.8 408.2 803.9 410.1 804.8 412.1 805.1 414.3 806.3 416.7 805.7 419.5 806.6 422 804.2 423.4 802 425 799.7 425.9 797.4 426.5 795.5 428.6 792.8 429.6 790.6 429.9 788.9 431.6 786.7 431.9 784.1 430.4 782.1 428.1 783.5 426.4 784.8 424.7 786.7 423.5 788.7 422.3 790.7 421.4 792.8 420.4 794.9 418.5 795.9 415.8 796.9 413.5 798.2 411.3 797.6 408.9 796.7 406.7ZM782.9 429.6 787.5 431.1 788.3 435 786 436.5 782.9 433.4ZM677 494.8 679 495 680.8 494.1 681.9 497 683.9 499.4 684.2 502.2 683.1 504.8 681.4 505.9 679.3 506.3 677.8 504.6 677 502.5 677.3 499.9 677 497.4ZM749.4 467.3 748.8 469.1 747.3 470.2 745.4 470.2 743.8 469.1 743.3 467.3 743.8 465.5 745.4 464.4 747.3 464.4 748.8 465.5ZM773.4 455.1 773 458.5 772 460.6 770.8 460.6 769.8 458.5 769.4 455.1 769.8 451.7 770.8 449.5 772 449.5 773 451.7ZM714.2 505.9 716.5 506.2 718.3 504.3 720.6 504.5 723 506 724.5 508.4 727 509.8 728.4 512.4 730.6 514.4 732.5 516.6 733.8 519 734.9 521.5 736.7 523.6 737.5 526.1 739.1 528.2 741 530 741.3 532.4 742.5 534.6 743.3 536.9 742.8 539.8 741.7 542.6 739.9 541.2 738.2 539.6 735.9 538.9 734.1 536.3 732 533.9 729.5 531.9 728 529.1 725.7 526.8 724 524.2 722.6 521.4 720.8 518.9 719.1 516.3 717.9 513.9 715.9 511.9 714.8 509.4 714.1 507.7ZM741.3 537.7 744 538.5 746.8 539.2 749.7 539.2 752.6 540.6 755.8 540.9 758.9 541.5 762 541.8 764.8 543.7 768 543.8 770.1 545.3 772.6 545.6 774.9 546.4 774.2 548 773.4 549.6 770.6 549.1 767.8 548.9 765 548.4 762 547.2 758.9 546.6 755.8 546.2 752.8 545.4 749.7 545 746.6 544.6 743.8 543.4 741 542.3 740.6 540ZM749.1 516.5 751.4 515.5 753.5 514 756.4 513.4 758.6 511.4 760.8 510.2 761.6 507.6 763.7 506.3 765.1 504.5 767 503.2 768.2 501.2 770 502.2 771.4 503.7 772.9 505.4 774.6 506.9 772.8 509 771.4 511.4 772.6 513.8 772.6 516.5 772.6 518.8 771.3 520.7 770.8 522.8 771 525.1 770.5 527.3 769.4 529.3 768.2 531.1 767.1 532.9 766.3 534.9 764.2 534.7 762 535.2 759.9 534.3 757.9 532.9 755.3 532.3 753.5 530.5 752.1 527.8 750.3 525.4 748.8 523.1 748.5 520.3 748.5 518.4ZM775.7 520.8 778.1 519.8 780.3 518.5 783.3 517.7 786.4 517.8 789.4 517 789.3 518.9 787.9 520.1 785.9 521.1 784 522 781.8 522.4 780.6 524.6 780.3 527 782.7 528.9 784.1 531.5 783.7 533.9 782.6 536.1 780.3 535.1 778.7 533.1 778.5 535.6 777.2 537.7 775.7 537 774.1 536.9 774.7 534.6 773.9 532.3 774.1 530 774.3 527.7 774.9 525.4 775 523ZM772.6 470.4 774.8 469.6 777.2 469.6 777.3 472.5 778.7 475 778.1 478.1 777.2 481.1 778.3 483.7 780.3 485.7 782.7 487.5 784.9 489.5 781.8 490.2 779.7 489.2 778.7 487.3 777.2 485.7 776.6 483.4 775 481.6 774.1 479.5 773.6 477.2 772.6 475 772.7 472.7ZM783.3 497.9 785.7 497.5 787.3 495.7 789.4 494.8 791.4 496.8 792.5 499.4 791.4 502.4 791.7 505.5 789.6 505.9 787.9 507.1 786.5 505.4 784.9 504 783.2 502.7 781 502.5 782.3 500.3ZM780.3 487.2 782.8 487.1 784.9 485.7 787.3 487.8 789.4 490.2 789.2 492.7 787.9 494.8 785.5 494.5 783.3 495.6 782.5 493.5 781 491.8 780.8 489.5ZM767.3 498.7 773.4 490.2 774.9 491 768.8 499.7ZM798 519.3 797.7 521.8 796.8 523.4 795.8 523.4 795 521.8 794.6 519.3 795 516.8 795.8 515.2 796.8 515.2 797.7 516.8ZM800.9 531.5 799.9 532.3 797.2 532.7 793.9 532.7 791.2 532.3 790.2 531.5 791.2 530.8 793.9 530.4 797.2 530.4 799.9 530.8ZM780.4 548.1 780 548.7 778.7 549.1 777.2 549.1 776 548.7 775.5 548.1 776 547.4 777.2 547.1 778.7 547.1 780 547.4ZM786.2 547.3 785.8 547.9 784.8 548.3 783.4 548.3 782.4 547.9 782 547.3 782.4 546.7 783.4 546.3 784.8 546.3 785.8 546.7ZM784.9 549.9 792.5 544.6 794.8 545.3 787.2 551.1ZM588.2 592.9 586.7 590.8 587.3 588 585.9 585.9 587 583.7 586.4 581 587.2 578.8 588.2 576.5 588.3 574 590 571.9 590.3 569.5 590.6 567.1 592.8 565.3 595.3 563.9 597.6 562.4 599.6 560.3 600.4 557.4 602.4 555.3 603.9 557.8 605.9 560 605.5 562.4 606.5 564.7 605.9 567.1 604.6 569.3 603.5 571.6 603.9 574.4 602.4 576.5 601.6 578.9 600.6 581.2 599.5 583.5 598.8 585.9 598.2 588.5 596.2 590.5 595.3 592.9 592.7 593.6 590.6 595.3 589.5 594ZM747.3 618.8 747.7 615.7 749.7 613.2 750.5 610.2 749.9 607.5 750.9 604.8 750.5 602.1 750.5 599.4 750.4 596.6 751.2 593.9 752 591.3 752.6 588.6 754.5 587.2 755.9 585.3 757 583.2 759.2 581.5 762 581.1 764.5 580 767.3 579.1 769.8 577.5 772.1 575.7 773.7 573.7 775.5 571.9 777.5 570.3 779.4 568.6 780.6 566.3 782.8 564.9 785.1 564.1 787.5 563.4 789.3 561.7 791.9 563 794.7 563.8 796 561.6 797.2 559.3 799 557.4 801 556.2 802.5 554.4 804.4 553 807.1 553.2 809.6 554.2 812 555.2 814 556.2 816.3 556.3 815.4 558.5 813.8 560.5 813 562.8 815.5 564.7 817.4 567.1 819.1 569.2 821.7 570.3 822.1 567.7 822.7 565.2 823.7 562.9 824.9 560.6 826.5 557.9 826.9 554.8 828.1 552 829.6 554.8 831.4 557.4 832.5 559.9 833.8 562.3 834.6 564.9 835.4 567.7 836.3 570.6 836.8 573.5 837.2 576 838.4 578.1 840 580 840.6 582.4 842 584.4 843.2 586.5 843.7 589.5 845.7 592 846 595.1 845.2 597.9 845.6 601 844.3 603.7 843.4 605.9 842.6 608.2 841.1 610.2 839.9 612.6 838.8 614.9 836.8 616.7 835.3 619.1 833.7 621.3 831.4 623.1 829.1 624.7 826.8 626.4 824.9 628.5 822.6 629.3 820.4 630.4 818.4 631.8 816.4 632.7 814.1 632.1 812 632.9 809.4 631.7 806.6 630.7 804.4 629.7 802.3 628.5 801.3 626.1 800.2 623.7 800.1 621 798 619.8 795.8 618.8 794.5 616.4 792.6 614.5 789.8 613.6 787.2 612.4 784.9 612.2 782.9 613.6 780.7 613.4 778 613.4 775.5 614.3 773.1 615.6 770.3 616.8 767.4 617.9 764.5 618.8 761.9 619.3 759.4 620 757 621 754.8 621.3 752.7 622 750.5 622.1 748.6 620.8ZM805.5 637.2 808 636.9 810.5 636.5 813 636.1 814.9 636.8 816.3 638.2 814.1 640.6 813 643.6 810.3 644.5 807.7 645.8 806.6 644.2 805.5 642.6 805.9 639.9ZM879.9 618.8 881.8 619.5 883.1 621 883.5 623.7 884.2 626.4 886.9 627.3 889.6 628.5 888.2 630.9 886.4 632.9 884 634.6 881 635 878.6 636.3 876.7 638.2 875.4 636.6 873.4 636.1 875 634.1 877.3 632.8 878.8 630.7 880.3 628.2 880.6 625.3 880.7 623.1 880.1 621ZM872.4 637.2 874.3 638.5 875.6 640.4 873 641.7 870.7 643.4 868.1 644.7 866.1 646.3 864.1 648 861.4 648.4 859.4 650.1 856.6 651 854.6 653.2 851.9 654.4 849.3 653.4 846.5 653.3 848.4 651.9 849.6 650 850.8 648 852.9 646.9 854.8 645.3 857.5 645.1 859.4 643.6 861.5 642.4 863.4 640.8 865.7 639.9 868.1 639.3 870.3 638.4ZM801.2 525 803.4 524 805.5 522.8 808.3 522.8 810.9 523.9 812.2 525.9 813 528.2 815.5 527.4 818 526.6 820.6 526.5 822.9 527.2 825 528.1 827.1 529.3 830 530.3 832.7 531.8 835.7 532.6 838 533.3 840.2 534.4 842.2 535.8 844.8 536.8 846.5 539 843.9 540.1 842.2 542.3 840.8 543.7 840 545.5 842.3 546.9 844.3 548.7 847.2 550.1 849.7 552 847.4 551.9 845.4 553 842.8 551.7 840.3 550.3 837.9 548.7 835.8 546.9 833.5 545.5 831.5 546.9 829.2 547.7 827 547.8 824.8 547.7 822.8 546.6 820.3 545 817.4 544.4 817.2 541.6 816.3 539 814.7 537.3 812.6 536.3 810.9 534.7 807.9 533.6 805.5 531.5 804.3 529.9 803.3 528.2 802.9 526.2ZM847.6 535.8 850.2 534.9 853 534.7 853.5 532.3 855.1 530.4 852.9 529.2 850.8 527.8 852.3 528.7 854 528.2 855.5 530.7 857.7 532.6 856.1 535.1 855.1 537.9 852.9 537.8 850.8 538.6 848.6 539 848.7 537.2ZM859.4 536.9 861.8 537.9 864.1 539.1 866 540.9 868.1 542.3 869.9 544.2 872.2 545.3 874.4 546.6 876.7 547.7 876.8 550.4 877.8 553 875.1 551.9 872.4 550.9 870.6 548.8 868.2 547.5 865.9 546 863.7 544.4 861.8 541.8 859 540.1 858.5 538.4ZM888.3 566 888 568.4 887 569.9 885.8 569.9 884.8 568.4 884.4 566 884.8 563.6 885.8 562.1 887 562.1 888 563.6ZM875 578.9 877.8 577.4 882.7 584.3 880.6 586.5ZM909 572.5 913.3 568.1 918.1 567.1 916.6 570.3 911.2 574.6ZM812.4 539 812.1 540.8 811.4 541.9 810.4 541.9 809.7 540.8 809.4 539 809.7 537.3 810.4 536.2 811.4 536.2 812.1 537.3ZM102.4 459.6 108.6 461.8 113.6 464.6 114 468 111 469.5 109.8 466.5 111.5 464.5 107 462.5ZM52.4 568.3 52 569.4 51.2 569.9 50.4 569.4 50 568.3 50.4 567.2 51.2 566.7 52 567.2ZM635.2 660.8 634.6 662.4 633 663 631.4 662.4 630.8 660.8 631.4 659.2 633 658.6 634.6 659.2Z"/><path fill="none" d="M280.6 317.3 283.2 317 285.7 317.6 288.2 317.9 290.4 318 292.5 317 294.6 316.7 296.7 316.1 298.9 316.5 301 316M323.9 316 327 316 329.9 317 332.9 317.3 336.1 317.1 339.2 316.1 342.4 316 344.8 314.9 347.6 315.1 350 314.1M288.2 322.4 290.4 322.4 292.4 321.7 294.6 321.8 297 323 299.7 323.7 298.4 325.3 297.2 326.9 299.8 328.1 302.3 329.4M313.7 323 316.2 322.2 318.8 322.4 319.9 324.5 322 325.6 319.9 326.5 317.6 326.9 317.8 328.9 318.8 330.7M323.3 325.6 325.7 324.9 327.9 323.6 330.3 323 333.2 323.7 336.2 323.9 339.2 324.3M333.5 332.6 335.9 331.8 338 330.5 340.5 330.1 342.8 331.3 344.9 332.8 346.9 334.5 345.2 337 343.7 339.6 340.7 339.5 337.8 340.4 334.8 340.9"/></g><path fill="none" stroke="#0b5a8a" stroke-width="1" stroke-linejoin="round" d="M224.8 330.2 204.1 353.1 206 356 211.8 356 214.6 362.7 215.6 366.5M219 383.7 280.6 383.7 286.3 385.6 293 386.6 298.8 389.4 302.6 394.2 303.6 399 299.7 403.8 307.4 400.5 318.9 395.5 330.3 392.3 336.1 389.4 339.9 393.3 338 398M214.6 431.5 221.3 432.4 229 433.4 234.7 432.4 239.5 437.2 244.3 440.1 248.1 441.1 251 446.8 253.8 449.7M262.1 478.2 264 473.8 269.1 472.5 270.4 470 274.2 470M271.6 470.6 271 475.7M269.1 482.1 272.3 478.2 276.1 476.7M273.5 487.8 277.4 482.7 282.5 480.8 284.4 480.2M278 493.5 283.7 491M283.7 498.6 285 494.8M294.6 503.7 296.5 496.7M311.1 489.1 308 492.3 306.7 497.4 309.2 501.2 314.3 503.7 318.8 505 319.4 511.4 320.1 516.5M320.1 516.5 323.3 519.7 328.3 516.5 329.6 512.7 335.4 509.5 336.6 510.1M337.9 494.8 336.6 501.2 334.7 506.3 336.6 510.1 339.8 517.8 347.5 516.5 355.1 515.2 358.3 507.6M344.3 502.5 343 509.5 345.6 516.2M352.6 504.4 351.3 511.4 353.2 515.5M288.8 519 293.9 519.7 300.3 522.9 298.4 528 292.7 531.8 289.5 535.6 286.3 534.3M300.3 522.9 306.7 529.2 313.1 529.9 314.3 534.3 313.7 526.7 315 517.8 320.1 516.5M314.3 534.3 308 536.2 304.8 542 308 548.3 313.1 552.2 315 553.4M304.2 541.7 307.5 549.2 313.3 552.5 317.5 553.3 325 550 326.7 555 336.7 560 339.2 565.8 345 569.2 346.7 576.7 345.8 580 349.2 585 353.3 587.5 355.8 593.3 356.7 597.5 353.3 601.7 350 607.5 350 619.2 352.5 620M317.5 553.3 318.3 563.3 317.5 573.3 315.8 575M317.5 573.3 322.5 585 325.8 585.8 331.7 584.2 335 583.3 335.8 578.3 341.7 576.7 345.8 577.5M335 583.3 340 589.2 346.7 593.3 347.5 598.3 353.3 600 355.8 595.8M322.5 585 323.3 596.7 320.8 606.7 322.5 620 324.2 633.3 326.7 646.7 328.3 658.3 326.7 663.3 331.7 668.3 337.5 669.2 338.3 674.2M350 607.5 360 615 361.7 618.3M480.7 423.1 478.8 430.6 470.6 435.3 463.5 440 463.5 447.1M447.1 454.6 452.9 454.1 454.1 448.2 463.5 447.1 463.5 450.6 469.4 452.9 470.6 477.6 455.3 478.8 451.8 482.4 445.9 481.2 442.4 482.8M469.4 452.9 494.1 468.2 501.2 463.5 510.6 457.6M503.5 417.6 502.4 425.9 508.2 431.8 505.9 447.1 510.6 457.6 520 456.5 542.8 465.9M508.2 431.8 512.9 429.4M541.9 432.9 542.8 460.7 542.8 465.9M542.8 460.7 571.8 460.7M520 456.5 521.2 470.6 517.6 482.4 518.8 485.9M494.1 468.2 492.9 477.6 485.9 481.2 480 481.2 477.6 484.7 470.6 489.4M494.1 484.7 502.4 483.5 514.1 484.7 518.8 485.9 521.2 494.1 516.5 498.8 512.9 503.5 507.1 510.1M492.9 477.6 494.1 484.7 491.8 494.1 491.8 504.7M488.2 506.4 488.2 492.9 485.9 491.8M484 507.5 484.7 492.9 480 481.2M477.6 508.7 476.5 491.8 470.6 489.4M465.9 508.7 463.5 498.8 464.7 494.1 470.6 489.4M455.3 500 458.8 494.1 463.5 498.8M447.1 490.6 450.6 488.2 455.3 489.4 458.8 494.1M440.7 483.5 448.2 482.8 451.8 482.4M441.6 486.6 448.2 487.5 450.6 488.2M542.8 465.9 541.2 477.6 537.6 487.1 542.4 495.3M521.2 494.1 530.6 492.9 542.4 495.3M521.2 494.1 520 503.5 523.5 510.6M523.5 510.6 530.6 508.2 542.4 508.2 551.8 507.1 558.8 510.6 561.2 505.9 565.9 501.2M542.4 495.3 551.8 496.5 561.2 489.4 563.5 494.1 570.6 494.1 571.8 482.4M571.8 460.7 572.9 475.3 570.6 482.4 571.8 494.1 565.9 501.2 572.9 510.6 582.4 510.6 591.8 507.1 597.6 509.4M572.9 475.3 580 478.8 588.2 489.4M589.4 490.6 594.1 496.5 603.5 501.2 591.8 507.1M572.9 510.6 569.4 520 570.6 525.4 581.2 535.3M582.4 510.6 583.5 525.9M558.8 510.6 561.2 522.4 556.5 527.1 570.6 525.4M523.5 510.6 528.2 515.3 527.1 527.1 521.2 531.8 514.1 536.5 512.9 538.8M515.3 539.3 525.9 543.5 535.3 541.2 537.6 552.9 547.1 554.1 554.1 557.6 554.1 550.6 563.5 548.2M561.2 522.4 555.3 531.8 557.6 541.2 563.5 548.2M505.9 517.6 514.1 517.6 516.5 510.6 520 503.5M505.9 524.7 512.9 525.9 514.1 517.6M511.8 571.3 535.3 572.9 542.4 571.8M537.6 552.9 536.5 564.7 542.4 571.8M542.4 571.8 551.8 565.9 558.8 562.4 568.2 560 567.1 550.6 563.5 548.2M567.1 550.6 572.9 552.9 582.4 550.6M567.1 555.3 569.4 567.1 567.1 569.4 562.4 569.4M551.8 565.9 548.2 574.1 555.3 583.5 561.2 580 562.4 569.4 558.8 562.4M535.3 572.9 531.8 597.6 530.6 604.7M531.8 597.6 542.4 592.9 548.2 585.9 555.3 583.5M548.2 574.1 542.4 571.8M561.2 580 558.8 592.9 562.4 591.8M547.1 605.9 550.6 603.5 552.9 607.1 549.4 609.4 547.1 605.9M465.5 400.7 467.4 405.8 466.1 412.2 467.4 417.9M479.5 399.4 484.6 402 491 402.6M491 375.8 496.1 381.6 499.9 384.1 498.6 389.2 499.9 395 501.2 397.9M493.5 372.7 496.1 377.8 496.1 381.6M498 370.7 497.4 376.5 496.1 377.8M513.3 369.5 514.6 376.5 511.4 379.7 515.2 382.9 512 386.7 508.8 388 503.7 388 499.9 384.1M529.2 367.6 534.3 371.4 533.7 377.8 535 381.6 529.2 382.9 522.9 381.6 515.2 382.9M515.2 382.9 519 384.8 524.1 384.1 529.2 382.9M503.7 388 506.3 391.8 512.7 391.1 519 389.2 521.6 386.7 519 384.8M521.6 386.7 529.2 385.4 534.3 387.3 531.8 391.8 526.7 394.3 520.3 393.7 519 389.2M499.9 395 503.7 391.8 506.3 391.8M512.7 391.1 513.3 393.1M520.3 393.7 521.6 398.2 525.4 400.7 529.2 403.3 531.8 405.8M534.3 387.3 540.7 386.7 545.8 388 548.3 391.8 548.3 396.9M531.8 398.2 539.4 398.8 548.3 399.4M533.1 404.5 540.7 405.2 547.1 404.5M526.7 394.3 529.2 399.4 531.8 398.2M529.2 408.3 533.1 406.4 540.7 405.8M536.9 363.1 538.2 366.3 542 365 548.3 371.4 552.2 373.9 549.6 376.5 542 376.5 534.3 377.8M552.2 373.9 556 376.5 562.4 379 568.7 381.6 570.7 385.4 567.5 389.2 564.3 390.8M535 381.6 536.9 385.4 540.7 386.7M590.4 391.1 587.9 389.2 584.7 385.4 584.7 381.6 590.4 376.5 600.6 379 609.5 379 612.1 372.7 618.5 369.5 627.4 366.9 633.8 368.8 640 372M575.1 403.9 580.2 402 584 404.5 586.6 408.3 582.8 412.2 584 414.7 578.9 417.9 572.6 419.2 566.2 419.2M567.5 398.8 575.1 400.7 582.8 400.7 587.9 395.6M580.2 402 587.9 405.8 592.3 404.5M504.1 357.5 507 353.7 508.6 351.1 507.3 346 510.5 343.5 513.7 337.1 518.1 333.3 523.2 331.7 527.1 333.9M531.8 341.3 529.6 339 529 336.5 527.1 333.9 529.6 332.7 533.4 329.8 536.6 330.7 537.9 332 539.8 327.6M536.6 330.7 539.2 334.6 541.1 339 542.4 343.5 545.5 347.3 542.4 351.1 541.1 354M540.4 355.6 539.2 358.8 540.8 361.5M532.5 361.3 536 362 540.8 361.5M529 365.5 533.4 364.5 537.9 365.2 540.8 361.5M620 368.4 627.6 366.9 635.3 370.7 642.9 370 653.7 378.4 661.3 379.9 670.5 383M670.5 383 664.4 388.3 664.4 392.9 659.8 396 662.8 400.5 658.2 402.1M670.5 383 681.2 379.1 691.9 379.9 693.4 376.1 702.6 379.1 714.8 383 727.1 380.7 734 382.2 737.8 386.8 743.9 389.8M670.5 383 678.1 386.8 682.7 392.9 693.4 396 699.5 400.5 711.8 402.1 717.9 404.4 727.1 400.5 730.1 395.2 737.8 392.1 743.9 389.8M734 382.2 737.8 373 745.4 372.2 753.1 376.1 760.7 382.2 768.4 386.8 774.5 386 776 392.9 773 396 776 400.5M762.3 411.3 766.8 405.1 773 402.1 776 401.3M770.7 415.1 776.8 413.5M620 399 629.2 400.5 635.3 406.7 639.9 405.1 649.1 400.5 658.2 402.1M639.9 405.1 641.4 409.7 650.6 408.2 658.2 402.1M636.8 411.3 642.9 414.3 650.6 415.8 652.9 413.1M658.2 417.4 662.8 422 665.9 429.6 672 436.5 681.2 440.3 690.4 443.4 699.5 441.8 708.7 439.6 714.8 441.8 716.4 448M672 438 679.7 443.4 690.4 446.4 690.4 443.4M692.3 444.4 694.6 452 694.6 460.4M701.5 459.7 703.8 453.5 700 448.9 693.1 447.4M702.3 460.4 704.6 455.1 708.4 448.9 713 443.6 710.7 439.8 703.8 440.5 697.7 443.6 692.3 444.4M713 443.6 716 450.5 720.6 457.4 726 459.7M720.6 457.4 719.1 464.2 722.1 471.9 719.8 479.5 721.4 485.7M726 459.7 731.3 457.4 735.9 458.9 738.2 467M731.3 457.4 729.8 464.2 735.9 468.8 741.3 476.5 742.8 482.6M726 459.7 726.7 467.3 732.1 470.4 735.1 476.5 735.9 482.6 742.8 482.6M735.9 482.6 731.3 483.4 729 485.7M742.8 482.6 742 488.7 739 493.3M751.2 518.5 758.9 517.8 763.4 513.2 766.5 507.1 771.9 510.1M828.1 530 827.1 548.7M607.8 394.2 609.7 404.7 621.2 412.4 630.8 416.2 637.5 412.4M603 412.4 613.6 414.3 623.1 421.9 628.9 423.8M619.3 400.9 623.1 408.5 630.8 416.2M637.5 412.4 644.1 416.2 649.9 414.3M566 419.4 573.7 418.4 580.8 416.8 584.9 415.3M579.3 417.3 578.2 421.9 574.2 425.5 567.5 430.6M584.9 415.3 588.9 423.5 593 430.6 595.6 436.7 596.6 438.2M574.2 429.6 580.8 433.7 587.9 439.3 595.1 439.3M567.5 430.6 573.7 430.6 569.6 434.7 566.5 438.8 565 440.8M587.4 473.4 595.1 472.9 601.2 469.9 609.3 469.3 612.9 475M609.3 469.3 616 466.3 616 460.2 613.4 457.1 616.5 451M607.3 455.1 611.4 457.1 616 460.2M629.7 450.5 632.3 446.4 628.7 439.8 627.2 434.7 624.6 426.5 624.1 421.9M628.7 439.8 637.9 438.2 642 433.7 646.1 429.6 647.1 423.5 646.1 417.3 651.2 418.2M624.1 421.9 631.8 418.4 637.9 416.8 643 413.8 646.1 417.3M646.6 453.5 652.2 453 648.1 444.9 652.2 440.8 657.3 430.6 654.2 425.5 661.4 423.5 659.3 419.4 651.2 418.2M605.3 413.3 611.4 414.8 617.5 416.3 624.1 421.9"/></svg><!--/MAP-->
  <div class="abs" style="left:24px;top:659px;width:896px;height:2px;background:#f0f0f1"></div>
  <div class="cb" style="left:556px;top:673px"></div>
  <span id="tKeep" class="t lbl" style="left:595.7px;top:677px;font-size:26px;letter-spacing:0.19px">Keep active tooltip visible</span>
</div>

<div id="authorbox" class="postbox">
  <div class="hndle"><span id="tAuthor" class="t" style="left:25.1px;top:23.5px;font-size:28px;letter-spacing:-0.43px">Author</span>
    <svg class="hicons" viewBox="0 0 160 71"><g fill="none" stroke="#787c82" stroke-width="3.4"><path d="M18.2 42.6 30.4 30.4 42.6 42.6"/><path d="M70 29.4 82.2 41.6 94.4 29.4"/></g><path d="M127 40 135 28 143 40z" fill="#787c82"/></svg>
  </div>
  <div class="sel wp" style="left:26px;top:85px;width:254px;height:60px;border-color:#8c8f94;box-shadow:none"><span id="tAdmin" class="t" style="left:15.6px;top:15px;font-size:28px;letter-spacing:0.59px">admin (admin)</span>
    <svg class="abs" style="left:208px;top:12px" width="32" height="32" viewBox="0 0 20 20"><path d="M5 6l5 5 5-5 2 1-7 7-7-7 2-1z" fill="#50575e"/></svg>
  </div>
</div>

<div id="side" class="postbox">
  <div class="hndle"><span id="tMapSettings" class="t" style="left:24px;top:22.4px;font-size:28px;letter-spacing:0.39px">Map Settings</span>
    <svg class="hicons" viewBox="0 0 160 71"><g fill="none" stroke-width="3.4"><path d="M18.2 42.6 30.4 30.4 42.6 42.6" stroke="#a7aaad"/><path d="M70 29.4 82.2 41.6 94.4 29.4" stroke="#787c82"/></g><path d="M127 40 135 28 143 40z" fill="#787c82"/></svg>
  </div>

  <div class="sec dot" style="top:73px;height:117px">
    <span id="tShortcode" class="t lbl" style="left:25px;top:24px;font-size:26px;letter-spacing:0.27px">Shortcode:</span>
    <span id="tAtlas" class="t" style="left:25.3px;top:60px;font-size:26px;letter-spacing:0.71px;color:#3c434a">[atlas-map 10] <a style="color:#2271b1;text-decoration:underline">Copy</a></span>
  </div>

  <div class="sec dot gray" style="top:190px;height:138px">
    <span id="tMapL" class="t lbl" style="left:24px;top:21.9px;font-size:26px;letter-spacing:0.87px">Map:</span>
    <div class="sel" style="left:24px;top:56px;width:508px"><span id="tWorld" class="t" style="left:17.2px;top:15.5px;font-size:26px;letter-spacing:0.56px">World</span></div>
  </div>

  <div class="sec dot" style="top:328px;height:138px">
    <span id="tTheme" class="t lbl" style="left:25.1px;top:21.7px;font-size:26px;letter-spacing:0.28px">Theme:</span>
    <div class="sel" style="left:24px;top:56px;width:428px"><span id="tSky" class="t" style="left:15.8px;top:15.8px;font-size:26px;letter-spacing:0.31px">Sky Blue</span></div>
    <div class="abs" style="left:464px;top:58px;width:68px;height:52px;border:2px solid #dcdcde;border-radius:6px;background:#f6f7f7">
      <svg class="abs" style="left:20px;top:12px" width="24" height="24" viewBox="0 0 24 24"><path d="M2.7 12h18.6M12 2.7v18.6" stroke="#a7aaad" stroke-width="2.4" stroke-linecap="round" fill="none"/></svg>
    </div>
    <div class="abs" style="left:498px;top:48px;width:52px;height:27px;border-radius:14px;background:#e7e5e3"><span id="tPro" class="t b" style="left:12px;top:5.3px;font-size:15.5px;letter-spacing:1px;color:#47423d">Pro</span></div>
  </div>

  <div class="sec gray" style="top:466px;height:640px">
    <span id="tFeatures" class="t lbl" style="left:23.9px;top:23.6px;font-size:26px;letter-spacing:0.73px">Features</span>
    <div class="dash" style="left:147.3px;top:36px;width:320.8px;clip-path:inset(0 0 0 2.7px);background:repeating-linear-gradient(90deg,#dcdcde 0 5.9px,transparent 5.9px 11.75px)"></div>
    <div class="eye" style="top:18px"><svg width="32" height="32" viewBox="0 0 24 24" fill="none" stroke="#2271b1" stroke-width="2" stroke-linecap="round" stroke-linejoin="round"><path d="M2.062 12.348a1 1 0 0 1 0-.696 10.75 10.75 0 0 1 19.876 0 1 1 0 0 1 0 .696 10.75 10.75 0 0 1-19.876 0"/><circle cx="12" cy="12" r="3"/></svg></div>

    <div class="cb" style="left:24px;top:80px"><svg width="32" height="32" viewBox="0 0 32 32"><path d="M8 16.5 13.5 23 25.5 8.5" fill="none" stroke="#3582c4" stroke-width="5"/></svg></div>
    <span id="tTooltips" class="t lbl" style="left:65px;top:84px;font-size:26px;letter-spacing:-0px">Tooltips</span>
    <div class="eye" style="top:78px"><svg width="32" height="32" viewBox="0 0 24 24" fill="none" stroke="#2271b1" stroke-width="2" stroke-linecap="round" stroke-linejoin="round"><path d="M10.733 5.076a10.744 10.744 0 0 1 11.205 6.575 1 1 0 0 1 0 .696 10.747 10.747 0 0 1-1.444 2.49"/><path d="M14.084 14.158a3 3 0 0 1-4.242-4.242"/><path d="M17.479 17.499a10.75 10.75 0 0 1-15.417-5.151 1 1 0 0 1 0-.696 10.75 10.75 0 0 1 4.446-5.143"/><path d="m2 2 20 20"/></svg></div>

    <div class="cb" style="left:24px;top:140px"><svg width="32" height="32" viewBox="0 0 32 32"><path d="M8 16.5 13.5 23 25.5 8.5" fill="none" stroke="#3582c4" stroke-width="5"/></svg></div>
    <span id="tClickActions" class="t lbl" style="left:64px;top:144px;font-size:26px;letter-spacing:0.02px">Click Actions</span>
    <div class="eye" style="top:138px"><svg width="32" height="32" viewBox="0 0 24 24" fill="none" stroke="#2271b1" stroke-width="2" stroke-linecap="round" stroke-linejoin="round"><path d="M2.062 12.348a1 1 0 0 1 0-.696 10.75 10.75 0 0 1 19.876 0 1 1 0 0 1 0 .696 10.75 10.75 0 0 1-19.876 0"/><circle cx="12" cy="12" r="3"/></svg></div>

    <div class="sel" style="left:24px;top:198px;width:508px"><span id="tDefault" class="t" style="left:15px;top:15.8px;font-size:26px;letter-spacing:0.69px">Default region actions</span></div>
    <div class="dash" style="left:21.35px;top:278px;width:510.65px;clip-path:inset(0 0 0 2.65px);background:repeating-linear-gradient(90deg,#dcdcde 0 5.9px,transparent 5.9px 11.77px)"></div>

    <span id="tClickAction" class="t lbl" style="left:24px;top:308.2px;font-size:26px;letter-spacing:0.11px">Click Action:</span>
    <div class="sel" style="left:24px;top:342px;width:508px"><span id="tFollow" class="t" style="left:15px;top:16.2px;font-size:26px;letter-spacing:0.12px">Follow URL</span></div>

    <span id="tURL" class="t lbl" style="left:24px;top:425.9px;font-size:26px;letter-spacing:-0.38px">URL:</span>
    <div class="abs" style="left:24px;top:460px;width:508px;height:60px;border:2px solid #2271b1;border-radius:8px;background:#fff;box-shadow:0 0 0 2px #2271b1">
      <div class="abs" style="left:17px;top:12px;width:2px;height:34px;background:#000"></div>
    </div>
  </div>
</div>

</body>
</html>
